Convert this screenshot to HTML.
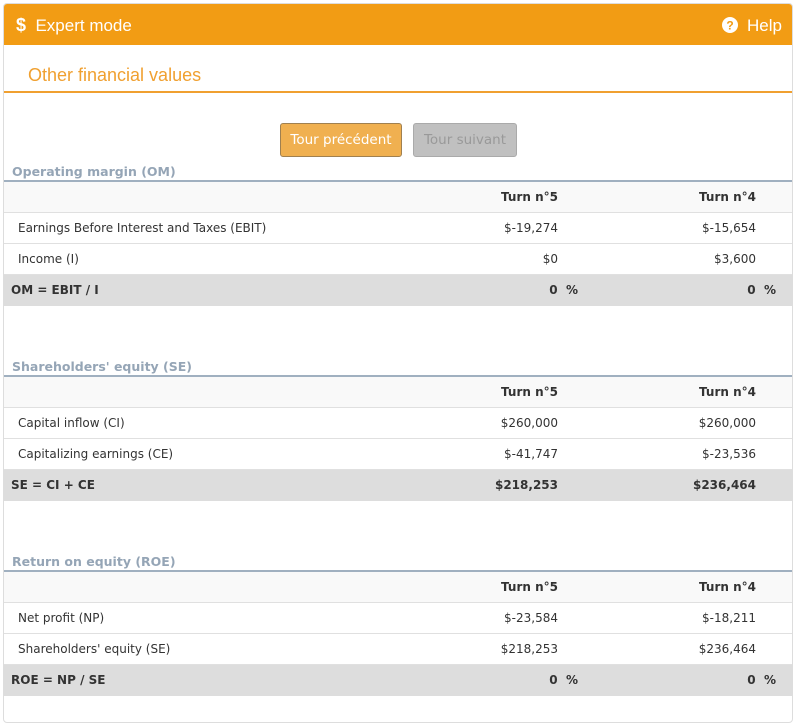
<!DOCTYPE html>
<html><head><style>
*{margin:0;padding:0;box-sizing:border-box}
body{width:798px;height:707px;background:#fff;font-family:"DejaVu Sans","Liberation Sans",sans-serif;font-size:12px;color:#333;position:relative;overflow:hidden}
.card{position:absolute;left:3px;top:3px;width:790px;height:720px;border:1px solid #ddd;border-radius:4px;overflow:hidden;background:#fff}
.hd{height:41px;background:#f29c14;color:#fff;font-family:"Liberation Sans",sans-serif;font-size:17px;position:relative}
.hd .l{position:absolute;left:12px;top:11px}
.hd .r{position:absolute;right:10px;top:12px}
.ttl{position:absolute;left:24px;top:61px;font-family:"Liberation Sans",sans-serif;font-size:18px;color:#f0a030}
.oline{position:absolute;left:0;top:87px;width:790px;height:2px;background:#f0a030}
.btn{position:absolute;top:119px;height:34px;border-radius:3px;font-size:13.5px;line-height:32px;text-align:center;font-family:"DejaVu Sans",sans-serif}
.sec{position:absolute;left:0;width:790px}
.st{position:absolute;left:8px;top:0;font-weight:bold;color:#95a5b6;font-size:12.5px}
.bl{position:absolute;left:0;top:16px;width:790px;height:2px;background:#a0b0c0}
.row{position:absolute;left:0;width:790px;height:31px;border-bottom:1px solid #e0e0e0;line-height:30px}
.row span{position:absolute}
.a{left:14px}.b{right:236px}.c{right:38px}
.tot{background:#ddd;font-weight:bold;border:none}
.tot .a{left:7px}.tot .b{right:216px}.tot .c{right:18px}
.th{background:#f9f9f9;font-weight:bold}
</style></head><body>
<div class="card">
<div class="hd"><span class="l"><b style="font-size:18px">$</b>&nbsp;&nbsp;Expert mode</span><span class="r"><svg width="16" height="16" viewBox="0 0 16 16" style="vertical-align:-2px"><circle cx="8" cy="8" r="8" fill="#fff"/><text x="8" y="12.5" text-anchor="middle" font-size="12" font-weight="bold" fill="#f29c14" font-family="Liberation Sans">?</text></svg>&nbsp;&nbsp;Help</span></div>
<div class="ttl">Other financial values</div>
<div class="oline"></div>
<div class="btn" style="left:276px;width:122px;background:#f0b050;border:1px solid #a08050;color:#fff">Tour précédent</div>
<div class="btn" style="left:409px;width:104px;background:#c0c0c0;border:1px solid #aaa;color:#999">Tour suivant</div>

<div class="sec" style="top:160px">
<div class="st">Operating margin (OM)</div><div class="bl"></div>
<div class="row th" style="top:18px"><span class="b">Turn n°5</span><span class="c">Turn n°4</span></div>
<div class="row" style="top:49px"><span class="a">Earnings Before Interest and Taxes (EBIT)</span><span class="b">$-19,274</span><span class="c">$-15,654</span></div>
<div class="row" style="top:80px"><span class="a">Income (I)</span><span class="b">$0</span><span class="c">$3,600</span></div>
<div class="row tot" style="top:111px"><span class="a">OM = EBIT / I</span><span class="b">0&nbsp; %</span><span class="c">0&nbsp; %</span></div>
</div>

<div class="sec" style="top:355px">
<div class="st">Shareholders' equity (SE)</div><div class="bl"></div>
<div class="row th" style="top:18px"><span class="b">Turn n°5</span><span class="c">Turn n°4</span></div>
<div class="row" style="top:49px"><span class="a">Capital inflow (CI)</span><span class="b">$260,000</span><span class="c">$260,000</span></div>
<div class="row" style="top:80px"><span class="a">Capitalizing earnings (CE)</span><span class="b">$-41,747</span><span class="c">$-23,536</span></div>
<div class="row tot" style="top:111px"><span class="a">SE = CI + CE</span><span class="b" style="right:236px">$218,253</span><span class="c" style="right:38px">$236,464</span></div>
</div>

<div class="sec" style="top:550px">
<div class="st">Return on equity (ROE)</div><div class="bl"></div>
<div class="row th" style="top:18px"><span class="b">Turn n°5</span><span class="c">Turn n°4</span></div>
<div class="row" style="top:49px"><span class="a">Net profit (NP)</span><span class="b">$-23,584</span><span class="c">$-18,211</span></div>
<div class="row" style="top:80px"><span class="a">Shareholders' equity (SE)</span><span class="b">$218,253</span><span class="c">$236,464</span></div>
<div class="row tot" style="top:111px"><span class="a">ROE = NP / SE</span><span class="b">0&nbsp; %</span><span class="c">0&nbsp; %</span></div>
</div>
</div>
</body></html>
